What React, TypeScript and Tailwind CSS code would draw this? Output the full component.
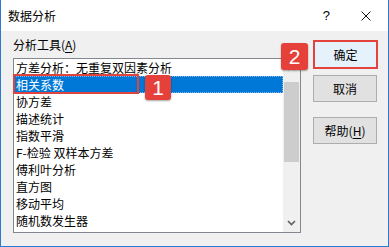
import React from "react";

const items = [
  "方差分析：无重复双因素分析",
  "相关系数",
  "协方差",
  "描述统计",
  "指数平滑",
  "F-检验 双样本方差",
  "傅利叶分析",
  "直方图",
  "移动平均",
  "随机数发生器",
];

function Badge({ n, className }: { n: string; className: string }) {
  return (
    <div
      className={
        "absolute flex items-center justify-center rounded-[3px] bg-[#e5413a] text-white text-[21px] leading-none font-['Liberation_Sans',sans-serif] shadow-[0_1px_2px_rgba(0,0,0,0.35)] " +
        className
      }
    >
      {n}
    </div>
  );
}

export default function App() {
  return (
    <div className="relative w-[389px] h-[247px] overflow-hidden bg-[#f0f0f0] border-x border-b border-[#2b7ad0] font-['Noto_Sans_CJK_SC',sans-serif] text-[12px] text-black">
      {/* Title bar */}
      <div className="flex h-[31px] items-center bg-white pl-[7px]">
        <span className="leading-none mt-[1px]">数据分析</span>
        <span className="ml-auto mr-[31px] font-['Liberation_Sans',sans-serif] text-[13px] leading-none">?</span>
        <svg width="10" height="10" viewBox="0 0 10 10" className="mr-[17px]">
          <path d="M0.5 0.5 L9.5 9.5 M9.5 0.5 L0.5 9.5" stroke="#111" strokeWidth="1" fill="none" />
        </svg>
      </div>

      {/* Body */}
      <div className="flex pl-[12px] pt-[6px]">
        <div className="flex flex-col">
          <div className="h-[16px] leading-[16px]">
            分析工具(<span className="underline underline-offset-2">A</span>)
          </div>
          <div className="mt-[5px] flex h-[175px] w-[288px] border border-[#828790] bg-white">
            <div className="flex w-[269px] flex-col">
              {items.map((it, i) =>
                i === 1 ? (
                  <div
                    key={it}
                    className="h-[17px] bg-[#0078d7] pl-[2px] leading-[17px] text-white outline-1 outline-dotted outline-[#8ab4e6] -outline-offset-1"
                  >
                    {it}
                  </div>
                ) : (
                  <div key={it} className="h-[17px] pl-[2px] leading-[17px] whitespace-nowrap">
                    {it}
                  </div>
                )
              )}
            </div>
            <div className="flex w-[17px] flex-col items-center bg-[#f0f0f0]">
              <div className="flex h-[17px] w-full items-center justify-center">
                <svg width="9" height="6" viewBox="0 0 9 6">
                  <path d="M1 5 L4.5 1.5 L8 5" stroke="#606060" strokeWidth="1.6" fill="none" />
                </svg>
              </div>
              <div className="mt-[6px] h-[80px] w-[15px] bg-[#cdcdcd]" />
              <div className="mt-auto flex h-[17px] w-full items-center justify-center mb-[1px]">
                <svg width="9" height="6" viewBox="0 0 9 6">
                  <path d="M1 1 L4.5 4.5 L8 1" stroke="#606060" strokeWidth="1.6" fill="none" />
                </svg>
              </div>
            </div>
          </div>
        </div>

        <div className="ml-[12px] flex flex-col pt-[3px]">
          <button className="flex h-[29px] w-[65px] items-center justify-center border-2 border-[#e2433c] bg-[#e5f1fb] leading-none">
            确定
          </button>
          <button className="mt-[6px] flex h-[27px] w-[64px] items-center justify-center border border-[#adadad] bg-[#e1e1e1] leading-none">
            取消
          </button>
          <button className="mt-[15px] flex h-[27px] w-[64px] items-center justify-center border border-[#adadad] bg-[#e1e1e1] leading-none">
            帮助(<span className="underline underline-offset-2">H</span>)
          </button>
        </div>
      </div>

      {/* Annotations */}
      <div className="absolute left-[12px] top-[74px] h-[20px] w-[126px] border-2 border-[#e2433c]" />
      <Badge n="1" className="left-[144px] top-[75px] h-[25px] w-[26px]" />
      <Badge n="2" className="left-[280px] top-[43px] h-[27px] w-[27px]" />
    </div>
  );
}
